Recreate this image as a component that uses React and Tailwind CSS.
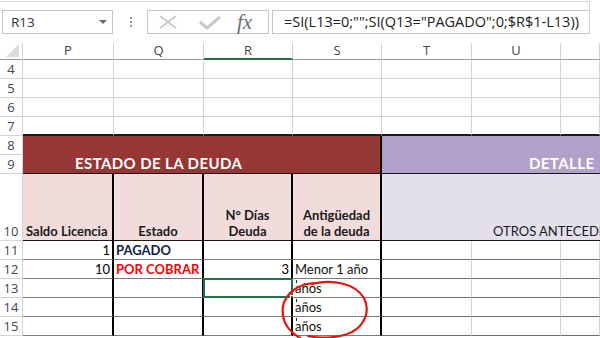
const cellFont = { fontFamily: "Lato, 'Liberation Sans', sans-serif" };
const uiFont = { fontFamily: "'Open Sans', 'Liberation Sans', sans-serif" };

const cols = ["P", "Q", "R", "S", "T", "U", "V"];

function RowHead({ n, row }) {
  return (
    <div
      className="flex items-end justify-center pb-0 border-b border-r border-[#d4d4d4] bg-white text-[13px] leading-[17px] text-[#3f4654]"
      style={{ ...uiFont, gridRow: row, gridColumn: 1 }}
    >
      {n}
    </div>
  );
}

function Cell({ row, col, className = "", children }) {
  return (
    <div
      className={`relative flex items-end overflow-visible whitespace-nowrap text-[13px] leading-[16px] px-[2px] pb-[1px] ${className}`}
      style={{ ...cellFont, gridRow: row, gridColumn: col }}
    >
      {children}
    </div>
  );
}

export default function App() {
  // grid rows: 1 header, 2-5 rows 4-7, 6-7 rows 8-9, 8 row 10, 9-13 rows 11-15
  const plain = "border-b border-r border-[#d4d4d4] bg-white";
  const dataP = "border-b border-b-[#7a7a7a] border-r-2 border-r-black bg-white";
  const dataT = "border-b border-b-[#6b6b6b] border-r border-r-[#d4d4d4] bg-white";

  const dataRows = [
    { n: 11, p: "1", q: "PAGADO", qc: "font-bold text-[#10204a]", r: "", s: "" },
    { n: 12, p: "10", q: "POR COBRAR", qc: "font-bold text-[#ff0000]", r: "3", s: "Menor 1 año" },
    { n: 13, p: "", q: "", r: "", s: "años" },
    { n: 14, p: "", q: "", r: "", s: "años" },
    { n: 15, p: "", q: "", r: "", s: "años" },
  ];

  return (
    <div className="relative w-[600px] h-[338px] overflow-hidden bg-white">
      {/* formula bar */}
      <div className="relative h-[43px] bg-white">
        <div className="absolute left-0 top-[1px] w-[590px] h-[1px] bg-[#d8d8d8]" />
        <div className="absolute left-[589px] top-[1px] w-[1px] h-[33px] bg-[#d8d8d8]" />
        <div className="flex items-center pt-[10px] pl-[2px]">
          <div
            className="flex items-center justify-between w-[111px] h-[24px] border border-[#c6c6c6] pl-[8px] pr-[5px] text-[13.5px] text-[#333]"
            style={uiFont}
          >
            <span>R13</span>
            <span className="w-0 h-0 border-l-[4px] border-r-[4px] border-t-[4px] border-l-transparent border-r-transparent border-t-[#6b6b6b]" />
          </div>
          <div className="flex flex-col gap-[2px] ml-[17px] w-[2px]">
            <span className="w-[2px] h-[2px] bg-[#9a9a9a]" />
            <span className="w-[2px] h-[2px] bg-[#9a9a9a]" />
            <span className="w-[2px] h-[2px] bg-[#9a9a9a]" />
          </div>
          <div className="flex items-center ml-[15px] w-[122px] h-[24px] border border-[#c6c6c6]">
            <svg width="22" height="16" viewBox="0 0 22 16" className="ml-[9px]">
              <path d="M3 2 L19 14 M19 2 L3 14" stroke="#c9c9c9" strokeWidth="1.6" fill="none" />
            </svg>
            <svg width="24" height="16" viewBox="0 0 24 16" className="ml-[19px]">
              <path d="M2 8 L9 14 L22 3" stroke="#c9c9c9" strokeWidth="3" fill="none" />
            </svg>
            <span
              className="ml-[15px] italic text-[21px] leading-none text-[#6d6d6d]"
              style={{ fontFamily: "'Liberation Serif', serif" }}
            >
              fx
            </span>
          </div>
          <div
            className="flex items-center ml-[3px] w-[317px] h-[24px] border border-[#c6c6c6] border-r-0 pl-[11px] text-[14.5px] text-[#222] whitespace-nowrap"
            style={uiFont}
          >
            =SI(L13=0;"";SI(Q13="PAGADO";0;$R$1-L13))
          </div>
        </div>
      </div>

      {/* sheet */}
      <div className="grid grid-cols-[23px_91px_90px_89px_89px_90px_89px_39px] grid-rows-[17px_19px_19px_19px_19px_19px_19px_67px_19px_19px_19px_19px_19px]">
        {/* column headers */}
        <div
          className="relative border-b border-b-[#9b9b9b] border-r border-r-[#d4d4d4] bg-white"
          style={{ gridRow: 1, gridColumn: 1 }}
        >
          <svg className="absolute right-[3px] bottom-[2px]" width="13" height="13" viewBox="0 0 13 13">
            <path d="M13 0 L13 13 L0 13 Z" fill="#dcdcdc" />
          </svg>
        </div>
        {cols.map((c, i) => (
          <div
            key={c}
            className={`flex items-center justify-center text-[13px] text-[#444] bg-white border-r border-r-[#d4d4d4] ${
              c === "R" ? "border-b-2 border-b-[#217346]" : "border-b border-b-[#9b9b9b]"
            }`}
            style={{ ...uiFont, gridRow: 1, gridColumn: i + 2 }}
          >
            {c === "V" ? "" : c}
          </div>
        ))}

        {/* rows 4-7 */}
        {[4, 5, 6, 7].map((n, r) => (
          <>
            <RowHead key={`h${n}`} n={n} row={r + 2} />
            {cols.map((c, i) => (
              <div
                key={`${n}${c}`}
                className={
                  n === 7
                    ? "border-b-2 border-b-[#1a1a1a] border-r border-r-[#d4d4d4] bg-white"
                    : plain
                }
                style={{ gridRow: r + 2, gridColumn: i + 2 }}
              />
            ))}
          </>
        ))}

        {/* rows 8-9 */}
        <RowHead n={8} row={6} />
        <RowHead n={9} row={7} />
        <div
          className="flex items-end pl-[52px] pb-0 bg-[#953735] border-r-2 border-r-black border-b border-b-[#1a1a1a] text-white font-bold text-[15px] leading-[19px] tracking-[0.4px]"
          style={{ ...cellFont, gridRow: "6 / span 2", gridColumn: "2 / span 4" }}
        >
          ESTADO DE LA DEUDA
        </div>
        <div
          className="flex items-end pl-[147px] pb-0 bg-[#b1a0c7] border-b border-b-[#1a1a1a] text-white font-bold text-[15px] leading-[19px] tracking-[0.4px] whitespace-nowrap overflow-hidden"
          style={{ ...cellFont, gridRow: "6 / span 2", gridColumn: "6 / span 3" }}
        >
          DETALLE
        </div>

        {/* row 10 */}
        <RowHead n={10} row={8} />
        {[
          ["Saldo Licencia", "justify-start pl-[3px]"],
          ["Estado", "justify-center"],
          ["N° Días\nDeuda", "justify-center"],
          ["Antigüedad\nde la deuda", "justify-center"],
        ].map(([t, j], i) => (
          <Cell
            key={t}
            row={8}
            col={i + 2}
            className={`${j} text-center font-bold text-[#1a1a1a] bg-[#f2dcdb] border-r-2 border-r-black border-b border-b-[#1a1a1a] whitespace-pre-line`}
          >
            {t}
          </Cell>
        ))}
        <Cell
          row={8}
          col="6 / span 3"
          className="pl-[111px] pb-[1px] text-[12.5px] text-[#1a1a1a] bg-[#e4dfec] border-b border-b-[#1a1a1a] overflow-hidden"
        >
          OTROS ANTECEDE
        </Cell>

        {/* rows 11-15 */}
        {dataRows.map((d, r) => {
          const row = r + 9;
          return (
            <>
              <RowHead key={`h${d.n}`} n={d.n} row={row} />
              <Cell row={row} col={2} className={`justify-end ${dataP}`}>
                {d.p}
              </Cell>
              <Cell row={row} col={3} className={`${dataP} ${d.qc || ""}`}>
                {d.q}
              </Cell>
              <Cell row={row} col={4} className={`justify-end ${dataP}`}>
                {d.r}
                {d.n === 13 && (
                  <>
                    <span className="absolute left-[-1px] top-[-1px] right-[-2px] bottom-[-1px] border-2 border-[#217346]" />
                    <span className="absolute right-[-5px] bottom-[-4px] w-[6px] h-[6px] bg-[#217346] border border-white" />
                  </>
                )}
              </Cell>
              <Cell row={row} col={5} className={`${dataP} text-[#111]`}>
                {d.n >= 13 && (
                  <span className="absolute left-[3px] top-[1px] w-[1px] h-[3px] bg-[#222]" />
                )}
                {d.s}
              </Cell>
              <Cell row={row} col={6} className={dataT} />
              <Cell row={row} col={7} className={dataT} />
              <Cell row={row} col={8} className={dataT} />
            </>
          );
        })}
      </div>

      {/* hand-drawn red circle annotation */}
      <svg className="absolute left-0 top-0 pointer-events-none" width="600" height="338" viewBox="0 0 600 338">
        <path
          d="M312 284 C 332 279, 355 283, 364 298 C 370 310, 366 324, 352 332 C 340 338, 322 339, 308 336 M 314 283 C 298 284, 286 293, 283 306 C 281 320, 288 331, 300 338"
          stroke="#e8140c"
          strokeWidth="2.2"
          fill="none"
          strokeLinecap="round"
        />
      </svg>
    </div>
  );
}
